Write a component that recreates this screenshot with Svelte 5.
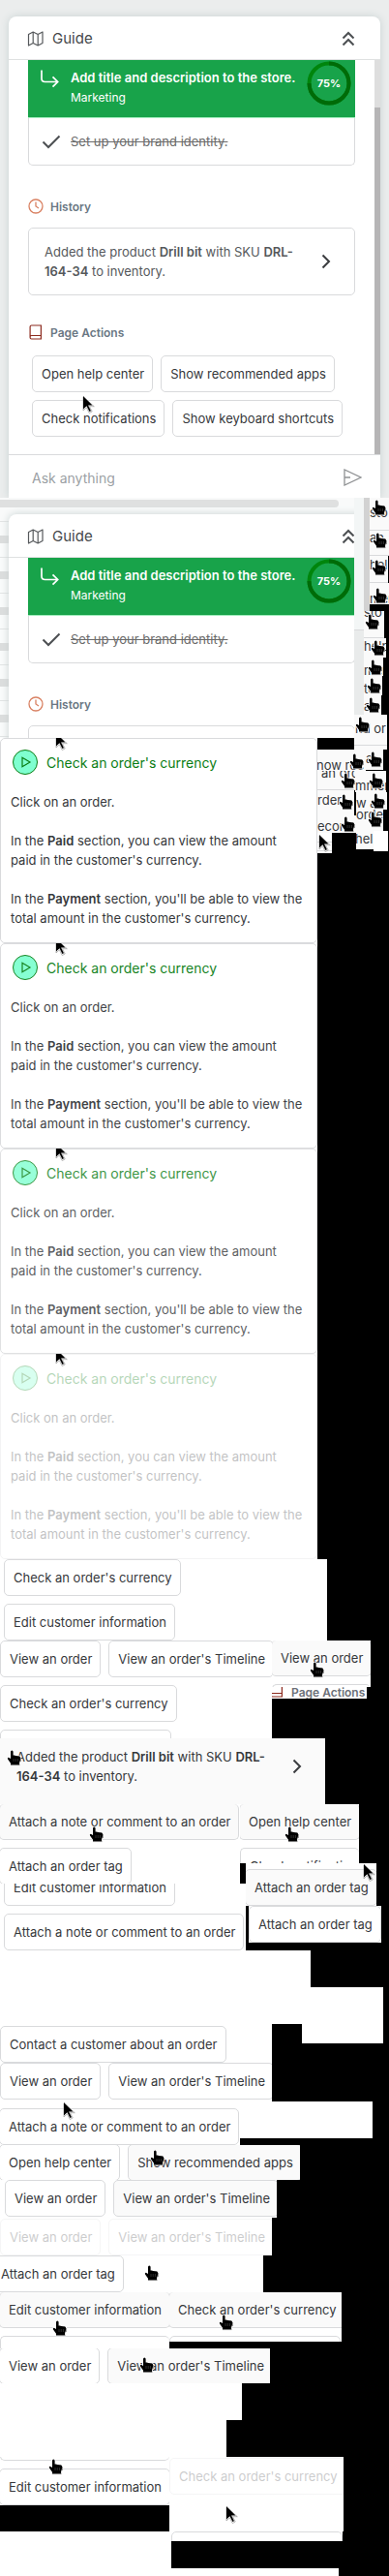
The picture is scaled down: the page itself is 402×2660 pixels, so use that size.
<script>
  const strays = [
    { x: 366, y: 514, w: 10, h: 137, bg: '#f3f6f6', line: 136 },
    { x: 366, y: 651, w: 10, h: 87, bg: '#e9ebeb' },
    { x: 376, y: 514, w: 6, h: 117, bg: '#d2d2d2' },
    { x: 382, y: 514, w: 20, h: 34, text: 'sto', ty: 7, cx: 2, cy: 2, line: 33 },
    { x: 382, y: 548, w: 20, h: 26, text: 'an', ty: -1, cx: 3, cy: 2, line: 25 },
    { x: 382, y: 574, w: 19, h: 28, text: 'hel', ty: 1, cx: 2, cy: 4, line: 27 },
    { x: 382, y: 602, w: 20, h: 22, text: 'mer', ty: 8, cx: 3, cy: 5 },
    { x: 376, y: 631, w: 21, h: 28, text: 'sto', ty: -7, cx: 1, cy: 3, line: 27 },
    { x: 376, y: 659, w: 23, h: 20, text: 'help', ty: 0, cx: 7, cy: 2 },
    { x: 376, y: 679, w: 20, h: 19, text: 'mer', ty: 5, cx: 4, cy: 2 },
    { x: 376, y: 698, w: 19, h: 20, text: 'ter', ty: 5, cx: 3, cy: 2 },
    { x: 376, y: 718, w: 18, h: 20, text: 'an', ty: 3, cx: 2, cy: 2 },
    { x: 366, y: 738, w: 34, h: 36, text: 'nd or', tx: 1, ty: 6, cx: 1, cy: 2, line: 31 },
    { x: 328, y: 774, w: 50, h: 22, text: 'now rec', tx: -1, ty: 8, cx: 33, cy: 4 },
    { x: 378, y: 774, w: 18, h: 21, text: 'a', ty: 1, cx: 2, cy: 2 },
    { x: 328, y: 796, w: 39, h: 20, text: 'an ord', tx: 4, ty: -6, cx: 24, cy: 2, line: 19 },
    { x: 367, y: 796, w: 32, h: 22, text: 'mmen', ty: 7, cx: 14, cy: 2 },
    { x: 328, y: 816, w: 38, h: 26, text: 'rder', ty: 2, cx: 22, cy: 4 },
    { x: 328, y: 842, w: 40, h: 18, text: 'econ', ty: 3, cx: 24, cy: 1 },
    { x: 368, y: 818, w: 32, h: 18, text: 'w an', ty: 3, cx: 15, cy: 1 },
    { x: 368, y: 836, w: 28, h: 22, text: 'orde', ty: -3, cx: 12, cy: 2 },
    { x: 368, y: 858, w: 18, h: 19, text: 'help', tx: -1, ty: 0 },
    { x: 386, y: 858, w: 15, h: 21, bg: '#fff' },
  ];
  const cards = [1, 0.94, 0.8, 0.3];
</script>

{#snippet hand(x, y)}
  <svg class="cursor" style="left:{x}px;top:{y}px" width="16" height="17" viewBox="0 0 16 17" aria-hidden="true">
    <path d="M4 2q0-1.500 1.300-1.500T6.600 2v3.500h1.600l.6.400h1.400l.6.400h1.400q2 .2 2 2l-.4 3-.7 1.700v2.500H4v-1.700L1 9.500q-.7-1.400.8-1.700L4 9z" fill="#000" stroke="#fff" stroke-width="1.600" paint-order="stroke" />
    <path d="M4 15.600h9.500M14.500 8v4" stroke="#777" stroke-width=".7" />
    <path d="M7 9v3M9.200 9v3M11.400 9v3" stroke="#444" stroke-width=".7" />
  </svg>
{/snippet}

{#snippet arrow(x, y)}
  <svg class="cursor" style="left:{x}px;top:{y}px" width="14" height="19" viewBox="0 0 14 19" aria-hidden="true">
    <path d="M1 1v14l3.400-3.200 2.800 5.700 3-1.500-2.800-5.300h4.900z" fill="#fff" stroke="#999" stroke-width=".7" />
    <path d="M1 0v13.500l3.500-3.300 2.900 5.800 1.600-.8-2.900-5.600h4.400z" fill="#000" />
  </svg>
{/snippet}

{#snippet btn(label, cls = '')}
  <button type="button" class="btn {cls}">{label}</button>
{/snippet}

{#snippet book()}
  <svg width="16" height="16" viewBox="0 0 16 16" fill="none" stroke="#8c2a1e" stroke-width="1.200" aria-hidden="true">
    <path d="M3.600 1h9.800v14H3.600q-1.500 0-1.500-1.500v-11Q2.100 1 3.600 1zM2.100 13q0-1.500 1.500-1.500h9.800" />
  </svg>
{/snippet}

{#snippet history()}
  <p class="history-text">Added the product <b>Drill bit</b> with SKU <b>DRL-<wbr />164-34</b> to inventory.</p>
  <svg width="10" height="16" viewBox="0 0 10 16" fill="none" stroke="#3b3d40" stroke-width="2" aria-hidden="true">
    <path d="M1.500 1.500 8 8l-6.500 6.500" />
  </svg>
{/snippet}

{#snippet guide(full)}
  <header class="head">
    <svg width="18" height="16" viewBox="0 0 18 16" fill="none" stroke="#55585b" stroke-width="1.200" stroke-linejoin="round" aria-hidden="true">
      <path d="M1.500 3.500 6.200 1l5 2.500L16 1v11.500L11.200 15l-5-2.500L1.500 15zM6.200 1v11.500M11.200 3.500V15" />
    </svg>
    <h2>Guide</h2>
    <svg width="14" height="16" viewBox="0 0 14 16" fill="none" stroke="#4d5053" stroke-width="2" aria-hidden="true">
      <path d="M1.500 7.500 7 2l5.500 5.500M1.500 14.500 7 9l5.500 5.500" />
    </svg>
  </header>
  <div class="body">
    <div class="task">
      <svg width="19" height="19" viewBox="0 0 19 19" fill="none" stroke="#fff" stroke-width="1.700" aria-hidden="true">
        <path d="M1 .5V9q0 3.500 3.500 3.500h13M12.500 7.300l5.200 5.200-5.200 5.200" />
      </svg>
      <div class="task-text"><b>Add title and description to the store.</b><span>Marketing</span></div>
      <svg class="ring" width="46" height="46" viewBox="0 0 46 46" aria-hidden="true">
        <circle cx="23" cy="23" r="20.500" fill="none" stroke="#00850c" stroke-width="4" />
        <path d="M23 2.500A20.500 20.500 0 1 1 2.500 23" fill="none" stroke="#006b08" stroke-width="4" />
        <text x="23" y="27" text-anchor="middle">75%</text>
      </svg>
    </div>
    <div class="done">
      <svg width="20" height="15" viewBox="0 0 20 15" fill="none" stroke="#4d5053" stroke-width="2" aria-hidden="true">
        <path d="M1.500 7.500 7 13 18.500 1.500" />
      </svg>
      <s>Set up your brand identity.</s>
    </div>
    <h3>
      <svg width="16" height="16" viewBox="0 0 16 16" fill="none" stroke="#d98162" stroke-width="1.300" aria-hidden="true">
        <circle cx="8" cy="8" r="7" /><path d="M8 3.500V8l3 2" />
      </svg>
      History
    </h3>
    <div class="history">{#if full}{@render history()}{/if}</div>
    {#if full}
      <h3>{@render book()} Page Actions</h3>
      <div class="actions">
        {@render btn('Open help center')}
        {@render btn('Show recommended apps')}
        {@render btn('Check notifications')}
        {@render btn('Show keyboard shortcuts')}
      </div>
    {/if}
  </div>
{/snippet}

<main>
  <section class="stage">
    <div class="panel">
      {@render guide(true)}
      <div class="track"><div class="thumb"></div></div>
      <form class="ask">
        <input aria-label="Ask anything" placeholder="Ask anything" />
        <svg width="19" height="18" viewBox="0 0 19 18" fill="none" stroke="#8f9193" stroke-width="1.300" aria-hidden="true">
          <path d="M1 1v16l17-8zM1 9h6" />
        </svg>
      </form>
    </div>
    {@render arrow(85, 409)}
  </section>

  <section class="second">
    <div class="bar"></div>
    <div class="panel">{@render guide(false)}</div>
  </section>

  {#each cards as opacity}
    <article class="card">
      <div class="card-in" style="opacity:{opacity}">
        <h4>
          <svg width="26" height="26" viewBox="0 0 26 26" fill="none" stroke="#0a7d14" aria-hidden="true">
            <circle cx="13" cy="13" r="12.500" fill="#7fffd0" /><path d="M10 8.200v9.600l8-4.800z" stroke-width="1.200" />
          </svg>
          Check an order's currency
        </h4>
        <p>Click on an order.</p>
        <p>In the <b>Paid</b> section, you can view the amount paid in the customer's currency.</p>
        <p>In the <b>Payment</b> section, you'll be able to view the total amount in the customer's currency.</p>
      </div>
      {@render arrow(57, -5)}
    </article>
  {/each}

  <div class="tile col in4" style="width:338px;height:84px">
    {@render btn("Check an order's currency")}
    {@render btn('Edit customer information')}
  </div>

  <div class="band" style="height:101px">
    <div class="tile col" style="width:281px;height:101px">
      <div class="row">{@render btn('View an order')}{@render btn("View an order's Timeline")}</div>
      {@render btn("Check an order's currency")}
      {@render btn('', 'blank')}
    </div>
    <div>
      <div class="tile col" style="width:102px;height:48px">
        {@render btn('View an order', 'hover cut')}
        {@render btn('', 'wide')}
        {@render hand(39, 22)}
      </div>
      <div class="tile crumb" style="width:98px;height:12px">{@render book()}<strong>Page Actions</strong></div>
    </div>
  </div>

  <div class="tile grey strip" style="width:336px;height:68px">{@render history()}{@render hand(7, 12)}</div>

  <div class="band" style="height:151px">
    <div style="width:254px">
      <div class="tile col" style="width:248px;height:82px">
        {@render btn('Attach a note or comment to an order', 'hover cut')}
        {@render btn('Attach an order tag', 'left')}
        {@render hand(92, 23)}
      </div>
      <div class="tile col in4 end" style="width:254px;height:69px">
        {@render btn('Edit customer information')}
        {@render btn('Attach a note or comment to an order')}
      </div>
    </div>
    <div>
      <div class="tile col back" style="width:123px;height:61px">
        {@render btn('Open help center', 'hover cut')}
        {@render btn('Check notifications', 'wide')}
        {@render hand(46, 23)}
      </div>
      <div class="tile col end" style="width:135px;height:44px">
        {@render btn('Attach an order tag', 'hover left')}
        {@render arrow(121, 1)}
      </div>
      <div class="tile col inset" style="width:137px;height:38px">{@render btn('Attach an order tag')}</div>
    </div>
  </div>

  <div class="tile" style="width:321px;height:38px"></div>
  <div class="tile" style="width:396px;height:38px"></div>
  <div class="band" style="height:80px">
    <div class="tile col end foot" style="width:281px;height:80px">
      {@render btn('Contact a customer about an order', 'flush')}
      <div class="row">{@render btn('View an order')}{@render btn("View an order's Timeline")}</div>
    </div>
    <div class="tile far" style="width:84px;height:20px"></div>
  </div>
  <div class="band" style="height:45px">
    <div class="tile col end" style="width:248px;height:45px">{@render btn('Attach a note or comment to an order', 'left')}{@render arrow(65, 1)}</div>
    <div class="tile" style="width:137px;height:38px"></div>
  </div>
  <div class="tile col pull" style="width:310px;height:36px">
    <div class="row">{@render btn('Open help center')}{@render btn('Show recommended apps', 'hover')}</div>
    {@render hand(155, 5)}
  </div>
  <div class="tile col in5" style="width:286px;height:39px">
    <div class="row">{@render btn('View an order')}{@render btn("View an order's Timeline", 'hover')}</div>
  </div>
  <div class="tile col end" style="width:281px;height:39px">
    <div class="row faded">{@render btn('View an order')}{@render btn("View an order's Timeline")}</div>
  </div>
  <div class="tile col pull9" style="width:272px;height:38px">{@render btn('Attach an order tag')}{@render hand(149, 10)}</div>
  <div class="band" style="height:58px">
    <div class="tile col" style="width:175px;height:58px">
      {@render btn('Edit customer information', 'hover cut')}
      {@render btn('', 'wide')}
      {@render hand(54, 29)}
    </div>
    <div class="tile col" style="width:178px;height:51px">
      {@render btn("Check an order's currency", 'hover cut')}
      {@render btn('', 'blank')}
      {@render hand(51, 23)}
    </div>
  </div>
  <div class="tile col pull" style="width:279px;height:36px">
    <div class="row">{@render btn('View an order')}{@render btn("View an order's Timeline", 'hover')}</div>
    {@render hand(144, 9)}
  </div>
  <div class="tile" style="width:250px;height:38px"></div>
  <div class="tile" style="width:234px;height:38px"></div>
  <div class="band" style="height:115px">
    <div style="width:177px">
      <div class="tile col end" style="width:175px;height:50px">
        {@render btn('', 'wide')}
        {@render btn('Edit customer information', 'left')}
        {@render hand(50, 2)}
      </div>
      <div class="tile drop" style="width:177px;height:38px"></div>
    </div>
    <div>
      <div class="tile pad1 nudge" style="width:180px;height:77px">
        <div class="faded">{@render btn("Check an order's currency")}</div>
        {@render arrow(58, 51)}
      </div>
      <div class="tile col" style="width:177px;height:10px">{@render btn('', 'blank')}</div>
    </div>
  </div>
  <div class="tile" style="width:350px;height:8px"></div>

  {#each strays as s}
    <div class="stray" style="left:{s.x}px;top:{s.y}px;width:{s.w}px;height:{s.h}px;background:{s.bg ?? '#fafafa'}">
      {#if s.text}<span style="left:{s.tx ?? 0}px;top:{s.ty}px">{s.text}</span>{/if}
      {#if s.line}<i style="top:{s.line}px"></i>{/if}
      {#if s.cx !== undefined}{@render hand(s.cx, s.cy)}{/if}
    </div>
  {/each}
  <div class="stray" style="left:328px;top:860px;width:15px;height:21px;background:#fff">
    <i style="top:9px"></i><i style="top:18px"></i>{@render arrow(1, 2)}
  </div>
</main>

<style>
  :global(body) { margin: 0; background: #000; }
  main, button, input { font-family: Inter, 'Liberation Sans', sans-serif; }
  main { position: relative; overflow: hidden; font-size: 13px; color: #36383b; }
  * { box-sizing: border-box; }
  h2, h3, h4, p { margin: 0; }
  b { font-weight: 600; }
  svg { flex: none; }
  .cursor { position: absolute; z-index: 2; overflow: visible; }

  .stage { position: relative; height: 514px; padding: 17px 9px 0; background: #ebeded; overflow: hidden; }
  .panel { position: relative; height: 497px; background: #fff; border-radius: 8px 8px 0 0; box-shadow: 0 0 8px #c8d2d2; overflow: hidden; }
  .second { position: relative; width: 366px; height: 248px; overflow: hidden; padding-left: 9px; padding-top: 2px;
    background: repeating-linear-gradient(#f9fafa 0 24px, #e2e4e4 24px 25px, #f9fafa 25px 37px); }
  .second::before { content: ''; position: absolute; left: 0; top: 39px; width: 9px; height: 209px;
    background: repeating-linear-gradient(#dcdddd 0 8px, #fafbfb 8px 22px, #e2e4e4 22px 23px, #fafbfb 23px 37px); }
  .second .panel { width: 384px; margin-top: 7px; }
  .bar { height: 8px; margin: 0 16px 0 -9px; background: #dfe0e0; border-radius: 0 4px 4px 0; }
  .head { height: 45px; display: flex; align-items: center; gap: 8px; padding: 1px 26px 0 19px; border-bottom: 1px solid #dfe1e1; }
  .head h2 { flex: 1; font-size: 15px; line-height: 20px; font-weight: 400; color: #45484b; }
  .body { padding: 0 26px 0 20px; }
  .task { height: 60px; display: flex; gap: 12px; padding: 10px 8px 0 13px; background: #18a34a; border-bottom: 1px solid #a5eec0; color: #fff; }
  .task-text { flex: 1; display: grid; align-content: start; white-space: nowrap; line-height: 16px; row-gap: 5px; }
  .task span { font-size: 12px; }
  .ring { margin-top: -9px; }
  .ring text { font-size: 11px; font-weight: 700; fill: #fff; }
  .done { height: 49px; display: flex; align-items: center; gap: 10px; padding-left: 13px; border: 1px solid #d9dadc; border-top: 0; border-radius: 0 0 5px 5px; color: #6b6b6b; }
  h3 { display: flex; align-items: center; gap: 7px; height: 20px; margin: 32px 0 12px; font-size: 12px; font-weight: 600; color: #6a7783; }
  .history { height: 70px; border: 1px solid #d9dadc; border-radius: 5px; display: flex; align-items: center; padding: 0 24px 0 16px; color: #55585b; }
  .strip .history-text { color: #36383b; }
  .history-text { flex: 1; line-height: 20px; padding-right: 20px; }
  .history + h3 { margin: 28px 0 14px; }
  .actions { display: flex; flex-wrap: wrap; gap: 8px; padding-left: 4px; }
  .btn { flex: none; height: 38px; padding: 0 8px 0 9px; border: 1px solid #d9dadc; border-radius: 5px; background: #fff; color: #36383b; font-size: 13px; white-space: nowrap; line-height: 20px; }
  .btn.hover { background: #fafafa; }
  .btn.left { margin-left: -1px; }
  .btn.cut { height: 37px; border-top: 0; margin-left: -1px; }
  .btn.wide { align-self: stretch; border-right: 0; text-align: left; }
  .btn.blank { width: 177px; }
  .track { position: absolute; right: 0; top: 45px; width: 6px; height: 407px; padding-top: 49px; background: #dedede; }
  .thumb { height: 100%; background: #b6b5b6; }
  .ask { position: absolute; inset: auto 0 0; height: 45px; border-top: 1px solid #d9dadc; background: #fff; display: flex; align-items: center; padding: 2px 19px 0 24px; }
  .ask input { flex: 1; min-width: 0; border: 0; padding: 0; font-size: 14px; background: none; }
  .ask input::placeholder { color: #9b9fa4; }

  .card { position: relative; width: 328px; height: 212px; background: #fff; overflow: hidden; }
  .card-in { height: 212px; border: 1px solid #d9dadc; border-radius: 5px; padding: 11px 10px; }
  .card p { line-height: 20px; margin-bottom: 20px; padding-right: 4px; }
  h4 { display: flex; align-items: center; gap: 9px; padding-left: 2px; margin-bottom: 18px; font-size: 14px; font-weight: 400; color: #0a7d14; }

  .band { display: flex; align-items: flex-start; }
  .tile { position: relative; flex: none; background: #fff; overflow: hidden; }
  .col { display: flex; flex-direction: column; align-items: flex-start; gap: 8px; }
  .row { display: flex; gap: 8px; }
  .end { justify-content: flex-end; }
  .foot { padding-bottom: 2px; }
  .in4 { padding-left: 4px; }
  .in5 { padding-left: 5px; }
  .pull { justify-content: center; }
  .pull .row { margin-left: -1px; }
  .pull9 .btn { margin-left: -9px; }
  .back { margin-left: -6px; }
  .inset { margin-left: 3px; }
  .nudge { margin-left: -2px; }
  .far { margin-left: 31px; }
  .drop { margin-top: 27px; }
  .pad1 { padding-top: 1px; }
  .flush { margin-bottom: -8px; }
  .faded { opacity: 0.25; }
  .grey { background: #fafafa; }
  .strip { display: flex; align-items: center; padding: 0 24px 10px 17px; }
  .crumb { display: flex; align-items: center; gap: 7px; padding-bottom: 2px; color: #6c7078; font-size: 12px; white-space: nowrap; }
  .crumb svg { margin: -4px 0 0 -3px; }
  .crumb strong { font-weight: 600; }

  .stray { position: absolute; overflow: hidden; }
  .stray span { position: absolute; line-height: 16px; white-space: nowrap; }
  .stray i { position: absolute; left: 0; right: 0; height: 1px; background: #d9dadc; }
</style>
